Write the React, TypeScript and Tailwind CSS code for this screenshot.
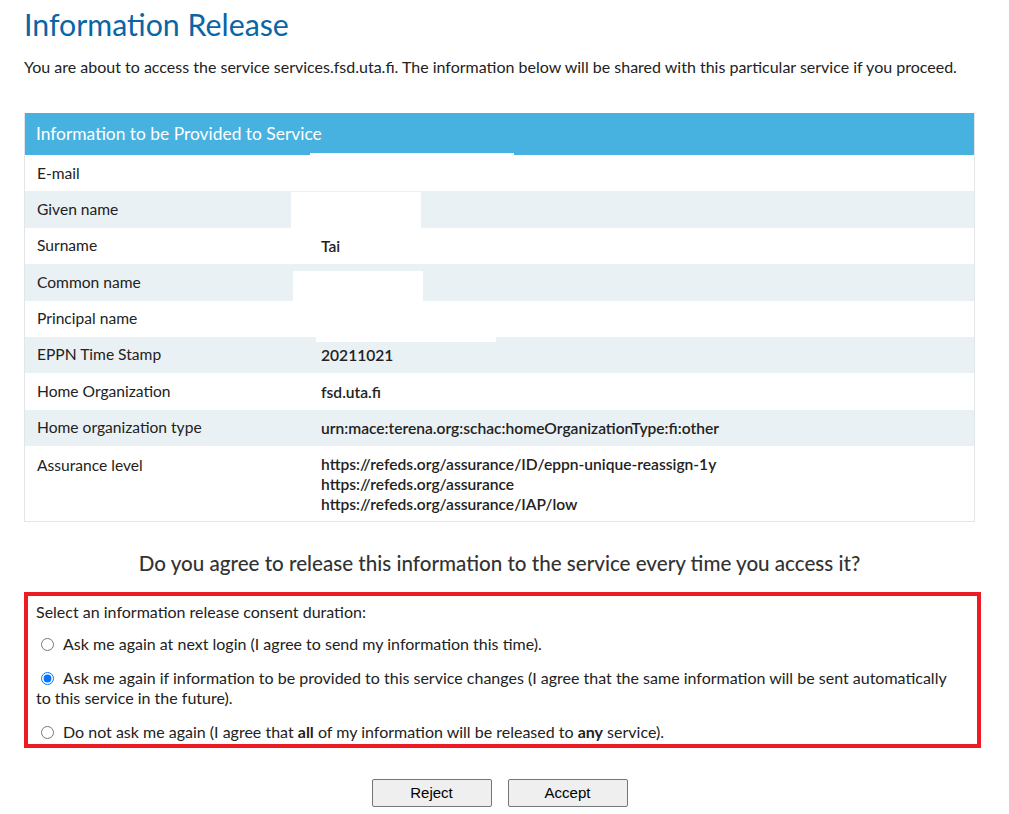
const rows: { label: string; value: string[] }[] = [
  { label: "E-mail", value: [] },
  { label: "Given name", value: [] },
  { label: "Surname", value: ["Tai"] },
  { label: "Common name", value: [] },
  { label: "Principal name", value: [] },
  { label: "EPPN Time Stamp", value: ["20211021"] },
  { label: "Home Organization", value: ["fsd.uta.fi"] },
  { label: "Home organization type", value: ["urn:mace:terena.org:schac:homeOrganizationType:fi:other"] },
  {
    label: "Assurance level",
    value: [
      "https://refeds.org/assurance/ID/eppn-unique-reassign-1y",
      "https://refeds.org/assurance",
      "https://refeds.org/assurance/IAP/low",
    ],
  },
]

export default function App() {
  return (
    <div className="min-h-screen bg-white text-[#222] font-['Lato','Noto_Sans',sans-serif] text-[16px]">
      <div className="pl-[24px] pr-[34px]">
        <h1 className="pt-[4px] text-[30.3px] leading-[40px] text-[#0a65a5]">Information Release</h1>
        <p className="mt-[13px] leading-[20px]">
          You are about to access the service services.fsd.uta.fi. The information below will be shared with this particular service if you proceed.
        </p>

        {/* Attributes */}
        <div className="relative mt-[36px] border border-t-0 border-[#e3e6e8] text-[15.6px]">
          <div className="h-[42px] bg-[#47b2df] px-[11px] flex items-center text-white text-[17.4px]">
            Information to be Provided to Service
          </div>
          {rows.map((row, i) => (
            <div
              key={row.label}
              className={`flex ${i % 2 === 1 ? "bg-[#eaf1f5]" : "bg-white"} ${row.value.length > 1 ? "min-h-[75px] pt-[8px]" : "h-[36.4px] items-center"}`}
            >
              <div className="w-[296px] pl-[12px]">{row.label}</div>
              <div className="font-semibold leading-[20px]">
                {row.value.map((v) => (
                  <div key={v}>{v}</div>
                ))}
              </div>
            </div>
          ))}
          {/* redacted values */}
          <div className="absolute left-[285px] top-[40px] w-[204px] h-[10px] bg-white" />
          <div className="absolute left-[266px] top-[79px] w-[130px] h-[37px] bg-white" />
          <div className="absolute left-[268px] top-[158px] w-[130px] h-[30px] bg-white" />
          <div className="absolute left-[291px] top-[188px] w-[180px] h-[41px] bg-white" />
        </div>

        <h2 className="mt-[27px] text-center text-[20.6px] font-medium text-[#333] leading-[28px]">
          Do you agree to release this information to the service every time you access it?
        </h2>

        <div className="mt-[15px] mr-[-6px] border-[4px] border-[#ed1c24] pl-[8px] pr-[18px] pt-[6px] pb-[2px] leading-[20px]">
          <p>Select an information release consent duration:</p>
          <div className="mt-[12px] flex flex-col gap-[14px]">
            <label className="flex items-start">
              <input type="radio" name="duration" className="mt-[4px] ml-[5px] mr-[9px] w-[13px] h-[13px]" />
              <span>Ask me again at next login (I agree to send my information this time).</span>
            </label>
            <label className="block">
              <input type="radio" name="duration" defaultChecked className="ml-[5px] mr-[9px] w-[13px] h-[13px] align-[-1px] accent-[#0075ff]" />
              Ask me again if information to be provided to this service changes (I agree that the same information will be sent automatically to this service in the future).
            </label>
            <label className="flex items-start">
              <input type="radio" name="duration" className="mt-[4px] ml-[5px] mr-[9px] w-[13px] h-[13px]" />
              <span>
                Do not ask me again (I agree that <b>all</b> of my information will be released to <b>any</b> service).
              </span>
            </label>
          </div>
        </div>

        <div className="mt-[31px] flex justify-center gap-[16px] font-['Liberation_Sans',Arial,sans-serif] text-[15px]">
          <button className="w-[120px] h-[28px] bg-[#efefef] border border-[#767676] rounded-[2px] text-black">Reject</button>
          <button className="w-[120px] h-[28px] bg-[#efefef] border border-[#767676] rounded-[2px] text-black">Accept</button>
        </div>
      </div>
    </div>
  )
}
